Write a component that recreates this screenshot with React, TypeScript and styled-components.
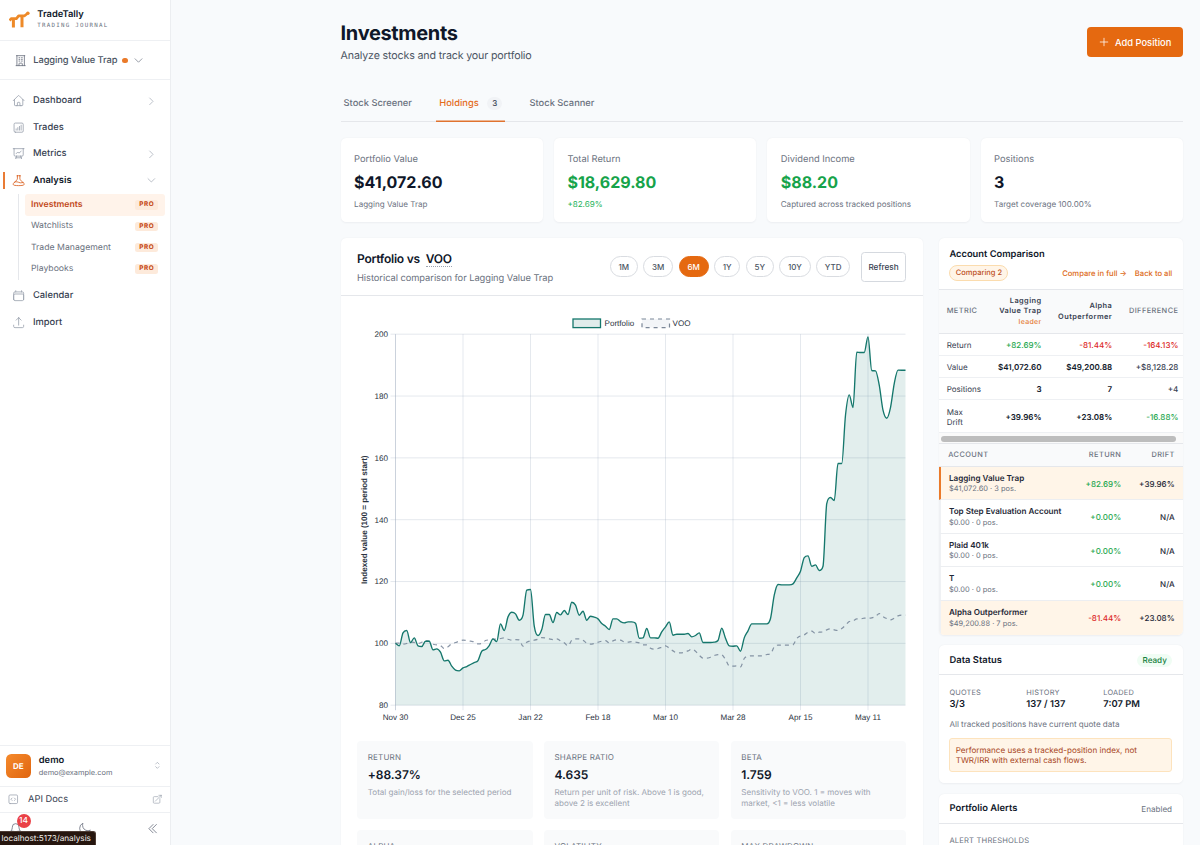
import React from 'react';
import styled, { createGlobalStyle, css } from 'styled-components';
import {
  HiOutlineHome,
  HiOutlineBuildingOffice,
  HiOutlineChevronRight,
  HiOutlineChevronDown,
  HiOutlineChartBarSquare,
  HiOutlinePresentationChartLine,
  HiOutlineBeaker,
  HiOutlineCalendar,
  HiOutlineArrowUpTray,
  HiOutlineBell,
  HiOutlineMoon,
  HiOutlineChevronDoubleLeft,
  HiOutlineChevronUpDown,
  HiOutlineCodeBracketSquare,
  HiOutlineArrowTopRightOnSquare,
  HiOutlinePlus,
} from 'react-icons/hi2';

const c = {
  ink: '#0f1729',
  body: '#374151',
  mid: '#4b5563',
  muted: '#6b7280',
  faint: '#9ca3af',
  line: '#e5e7eb',
  soft: '#f9fafb',
  page: '#f8fafc',
  orange: '#e56910',
  rust: '#c2410c',
  green: '#16a34a',
  red: '#dc2626',
};

const Global = createGlobalStyle`
  *, *::before, *::after { box-sizing: border-box; }
  body {
    margin: 0;
    background: ${c.page};
    color: ${c.ink};
    font-family: Inter, "Liberation Sans", sans-serif;
    text-rendering: geometricPrecision;
    -webkit-font-smoothing: antialiased;
    overflow: hidden;
  }
  button { font: inherit; cursor: pointer; }
  h1, h2, p { margin: 0; }
`;

const Shell = styled.div`
  display: flex;
  height: 845px;
  overflow: hidden;
  position: relative;
`;

/* Sidebar */

const Sidebar = styled.aside`
  width: 171px;
  flex: none;
  display: flex;
  flex-direction: column;
  background: #fff;
  border-right: 1px solid #eceef1;
`;

const Brand = styled.div`
  height: 41px;
  display: flex;
  align-items: center;
  gap: 7.1px;
  padding: 0 0 0 9.2px;
  border-bottom: 1px solid #eef0f3;
`;

const BrandName = styled.div`
  font-size: 9.33px;
  line-height: 12px;
  font-weight: 600;
`;

const BrandTag = styled.div`
  font-family: "DejaVu Sans Mono", monospace;
  font-size: 5.8px;
  line-height: 10px;
  letter-spacing: 1.25px;
  color: ${c.muted};
`;

const AccountSwitch = styled.div`
  height: 39px;
  display: flex;
  align-items: center;
  padding: 0.6px 0 0 14px;
  border-bottom: 1px solid #eef0f3;
  font-size: 9.33px;
  font-weight: 500;
  letter-spacing: -0.1px;
  color: ${c.mid};
  svg { width: 13.3px; height: 13.3px; color: ${c.muted}; }
  span { margin-left: 6px; }
  svg:last-child { width: 11px; height: 11px; margin-left: 5px; }
`;

const Dot = styled.i`
  width: 5.4px;
  height: 5.4px;
  border-radius: 50%;
  background: #ea7a2a;
  margin-left: 5px;
`;

const Nav = styled.nav`
  flex: 1;
  padding-top: 7.6px;
`;

const NavItem = styled.div<{ $active?: boolean }>`
  height: 26.5px;
  display: flex;
  align-items: center;
  padding: 0 13.5px 0 11.8px;
  font-size: 9.33px;
  font-weight: ${p => (p.$active ? 600 : 500)};
  color: ${p => (p.$active ? c.ink : c.body)};
  svg { width: 13.3px; height: 13.3px; flex: none; color: ${p => (p.$active ? '#d9601f' : c.faint)}; }
  span { flex: 1; margin-left: 7.9px; }
  svg:last-child { width: 10.7px; height: 10.7px; color: ${c.faint}; }
  ${p =>
    p.$active &&
    css`
      &::before {
        content: '';
        flex: none;
        width: 1.6px;
        height: 17px;
        background: #e97b35;
        margin: 0 7.1px 0 -8.7px;
      }
    `}
`;

const SubNav = styled.div`
  margin: 0.6px 5px 2.8px 18px;
  padding: 0 0 0 5.8px;
  border-left: 1px solid ${c.line};
`;

const SubItem = styled.div<{ $active?: boolean }>`
  height: 21.4px;
  display: flex;
  align-items: center;
  justify-content: space-between;
  padding: 0 7px 0 6.2px;
  border-radius: 3px;
  font-size: 8.7px;
  font-weight: ${p => (p.$active ? 600 : 400)};
  color: ${p => (p.$active ? '#c2491a' : c.muted)};
  background: ${p => (p.$active ? '#fff3ea' : 'transparent')};
`;

const Pro = styled.span`
  font-size: 6.4px;
  line-height: 9.4px;
  font-weight: 700;
  letter-spacing: 0.55px;
  padding: 0 3.8px 0 4.4px;
  border-radius: 2.5px;
  color: ${c.rust};
  background: #fdeadb;
`;

const UserRow = styled.div`
  height: 41.4px;
  border-top: 1px solid #eef0f3;
  display: flex;
  align-items: center;
  padding: 0 7.5px 0 6px;
  div { flex: 1; margin-left: 8.3px; padding-top: 1px; }
  b { display: block; font-size: 9.33px; line-height: 12px; font-weight: 600; }
  small { display: block; font-size: 7.4px; line-height: 11px; color: ${c.muted}; }
  svg { width: 10.7px; height: 10.7px; color: ${c.faint}; }
`;

const Avatar = styled.span`
  width: 24.5px;
  height: 24.5px;
  border-radius: 5.3px;
  background: linear-gradient(135deg, #f58a2c, #e0650f);
  color: #fff;
  font-size: 8px;
  font-weight: 700;
  display: grid;
  place-items: center;
`;

const DocsRow = styled.div`
  height: 26px;
  border-top: 1px solid #eef0f3;
  display: flex;
  align-items: center;
  padding: 0 8px 0 6.5px;
  font-size: 9.33px;
  color: ${c.body};
  svg { width: 12.5px; height: 12.5px; color: ${c.faint}; }
  span { flex: 1; margin-left: 9px; }
  svg:last-child { width: 10.5px; height: 10.5px; }
`;

const FootRow = styled.div`
  height: 33px;
  border-top: 1px solid #eef0f3;
  display: flex;
  align-items: center;
  justify-content: space-between;
  padding: 0 10.5px 0 9px;
  svg { width: 13.3px; height: 13.3px; color: ${c.muted}; }
`;

const BellWrap = styled.span`
  position: relative;
  display: flex;
`;

const Count = styled.span`
  position: absolute;
  left: 7.5px;
  top: -8.8px;
  width: 14px;
  height: 14px;
  border-radius: 50%;
  background: #ea4147;
  color: #fff;
  font-size: 8.4px;
  font-weight: 500;
  display: grid;
  place-items: center;
`;

const StatusTip = styled.div`
  position: absolute;
  left: 0;
  bottom: 0;
  height: 14px;
  width: 96px;
  padding-left: 1.5px;
  border-radius: 0 3px 0 0;
  border-top: 1px solid #4c3b33;
  border-right: 1px solid #4c3b33;
  background: #26160f;
  color: #f3efec;
  font-size: 8.2px;
  line-height: 13px;
  white-space: nowrap;
`;

/* Page head */

const Main = styled.main`
  width: 1012px;
  padding: 21px 0 0 169.6px;
`;

const PageHead = styled.header`
  width: 842.4px;
  height: 68px;
  display: flex;
  justify-content: space-between;
  align-items: flex-start;
  h1 { font-size: 20px; line-height: 24px; font-weight: 700; letter-spacing: -0.34px; }
  p { font-size: 10.67px; line-height: 16px; margin-top: 3.3px; letter-spacing: -0.15px; color: ${c.mid}; }
`;

const AddButton = styled.button`
  height: 30px;
  width: 96px;
  margin-top: 6px;
  border: 0;
  border-radius: 4px;
  background: ${c.orange};
  color: #fff;
  font-size: 9.33px;
  font-weight: 500;
  white-space: nowrap;
  display: flex;
  align-items: center;
  padding: 0 0 0 11px;
  gap: 5px;
  svg { width: 12px; height: 12px; }
`;

const Tabs = styled.div`
  width: 842.4px;
  height: 33px;
  display: flex;
  gap: 21.3px;
  border-bottom: 1px solid ${c.line};
`;

const Tab = styled.div<{ $active?: boolean }>`
  height: 33px;
  display: flex;
  align-items: center;
  padding: 0 3px 4px;
  font-size: 9.33px;
  font-weight: 500;
  color: ${p => (p.$active ? '#e46c1c' : c.muted)};
  ${p => p.$active && 'box-shadow: inset 0 -1.4px 0 #e0732f;'}
  span {
    margin-left: 8.5px;
    padding: 0 5px;
    line-height: 13px;
    border-radius: 7px;
    font-size: 8px;
    color: ${c.body};
    background: #f1f3f6;
  }
`;

/* Cards */

const Card = styled.section`
  background: #fff;
  border-radius: 5.3px;
  box-shadow: 0 0.7px 2px rgba(15, 23, 42, 0.05);
  overflow: hidden;
`;

const Stats = styled.div`
  width: 842.4px;
  margin-top: 16px;
  display: grid;
  grid-template-columns: repeat(4, 1fr);
  gap: 10.9px;
`;

const StatCard = styled(Card)`
  height: 84px;
  padding: 15px 13.5px 0;
`;

const StatLabel = styled.div`
  font-size: 9.33px;
  line-height: 14px;
  color: ${c.muted};
`;

const StatValue = styled.div<{ $good?: boolean }>`
  font-size: 16px;
  line-height: 21px;
  margin-top: 5px;
  font-weight: 700;
  color: ${p => (p.$good ? c.green : c.ink)};
`;

const StatNote = styled.div<{ $good?: boolean }>`
  font-size: 8.05px;
  line-height: 11px;
  margin-top: 5.5px;
  color: ${p => (p.$good ? '#22b358' : c.muted)};
`;

const Columns = styled.div`
  width: 842.4px;
  margin-top: 16px;
  display: grid;
  grid-template-columns: 582.1px 244.3px;
  gap: 16px;
  align-items: start;
`;

const ChartHead = styled.div`
  height: 58px;
  display: flex;
  justify-content: space-between;
  align-items: center;
  padding: 0 16.5px 0 16.4px;
  border-bottom: 1px solid ${c.line};
  h2 { font-size: 12px; line-height: 17px; margin-top: 3px; font-weight: 600; letter-spacing: -0.24px; }
  h2 span { margin-left: 3px; border-bottom: 1px dotted ${c.faint}; display: inline-block; line-height: 15px; }
  p { font-size: 9.33px; line-height: 14px; margin-top: 4.9px; letter-spacing: -0.06px; color: ${c.muted}; }
`;

const Ranges = styled.div`
  display: flex;
  align-items: center;
  gap: 5.2px;
`;

const Pill = styled.button<{ $on?: boolean }>`
  height: 20.6px;
  padding: 0 7.9px;
  border-radius: 11px;
  border: 1px solid ${p => (p.$on ? c.orange : '#d9dce1')};
  background: ${p => (p.$on ? c.orange : '#fff')};
  color: ${p => (p.$on ? '#fff' : c.mid)};
  font-size: 8px;
  font-weight: 500;
`;

const Refresh = styled.button`
  height: 30px;
  width: 45.3px;
  padding: 0;
  margin-left: 5.3px;
  border: 1px solid #d5d9df;
  border-radius: 3.5px;
  background: #fff;
  color: ${c.body};
  font-size: 8.2px;
  font-weight: 500;
`;

const ChartBody = styled.div`
  padding: 16px 16.5px;
  svg { display: block; overflow: visible; }
`;

const Metrics = styled.div`
  margin-top: 16px;
  display: grid;
  grid-template-columns: repeat(3, 1fr);
  gap: 11.2px;
`;

const Metric = styled.div`
  height: 78.3px;
  padding: 10.7px;
  background: ${c.soft};
  border-radius: 4px;
  b { display: block; margin-top: 4px; font-size: 12px; line-height: 16px; font-weight: 600; letter-spacing: -0.05px; }
  p { margin-top: 4.7px; font-size: 8.05px; line-height: 10.8px; color: ${c.faint}; white-space: pre-line; }
`;

const Caps = styled.div`
  font-size: 8px;
  line-height: 11px;
  letter-spacing: 0.18px;
  color: ${c.muted};
`;

/* Right column */

const Side = styled.div`
  display: flex;
  flex-direction: column;
  gap: 10.7px;
`;

const CompareHead = styled.div`
  height: 52px;
  padding: 9.5px 10.7px 0;
  border-bottom: 1px solid ${c.line};
  h2 { font-size: 9.33px; line-height: 14px; font-weight: 600; }
`;

const CompareLine = styled.div`
  display: flex;
  align-items: center;
  margin-top: 3.7px;
  font-size: 7.65px;
  font-weight: 500;
  color: #dd6a20;
  gap: 8px;
  white-space: nowrap;
`;

const Chip = styled.span`
  height: 16px;
  line-height: 14px;
  padding: 0 5.4px;
  border-radius: 8px;
  border: 1px solid #fbdcae;
  background: #fff5e8;
  color: #bd4f1c;
  font-size: 7.5px;
  margin-right: auto;
`;

const CompareRow = styled.div<{ $h: number; $head?: boolean }>`
  height: ${p => p.$h}px;
  display: grid;
  grid-template-columns: 48px 46.8px 70.7px 66.2px;
  align-items: center;
  padding: ${p => (p.$head ? 1 : 1.8)}px 0 0 8px;
  border-bottom: 1px solid ${p => (p.$head ? c.line : '#eef0f3')};
  background: ${p => (p.$head ? c.soft : '#fff')};
  font-size: 8px;
  line-height: 10.7px;
  color: ${c.body};
`;

const Head = styled.span<{ $strong?: boolean }>`
  text-align: right;
  font-size: 7.4px;
  line-height: 10.7px;
  letter-spacing: 0.42px;
  font-weight: ${p => (p.$strong ? 600 : 500)};
  color: ${p => (p.$strong ? c.body : c.muted)};
  &:first-child { text-align: left; }
  em { display: block; font-style: normal; font-weight: 500; font-size: 7px; letter-spacing: 0.3px; color: #e67a35; }
`;

const Num = styled.span<{ $tone?: 'good' | 'bad'; $bold?: boolean }>`
  text-align: right;
  font-weight: ${p => (p.$bold ? 600 : 500)};
  color: ${p => (p.$tone === 'good' ? '#1fa850' : p.$tone === 'bad' ? c.red : p.$bold ? c.ink : c.body)};
`;

const ScrollTrack = styled.div`
  height: 11px;
  padding: 2.8px 6.5px 0 2.5px;
  background: #fafafa;
  border-bottom: 1px solid ${c.line};
  &::before {
    content: '';
    display: block;
    height: 5.4px;
    border-radius: 3px;
    background: #bdbdbd;
  }
`;

const AccountRow = styled.div<{ $mark?: boolean; $tint?: boolean; $last?: boolean }>`
  height: ${p => (p.$last ? 33.7 : 33.5)}px;
  display: grid;
  grid-template-columns: 1fr 54px 53.5px;
  align-items: center;
  padding: 1px 8.4px 0 8.3px;
  border-left: 2.7px solid ${p => (p.$mark ? '#ea7a2a' : '#eff1f4')};
  border-bottom: ${p => (p.$last ? 0 : 1)}px solid #eceef1;
  background: ${p => (p.$tint ? '#fff5e8' : '#fff')};
  font-size: 8px;
  ${Num}:last-child { color: #1f2937; }
  b { display: block; font-weight: 600; font-size: 8.1px; line-height: 10.7px; white-space: nowrap; color: #1f2937; }
  small { display: block; font-size: 7.45px; line-height: 11.2px; color: ${c.muted}; }
`;

const AccountHead = styled.div`
  height: 22.5px;
  display: grid;
  grid-template-columns: 1fr 54px 53.5px;
  align-items: center;
  padding: 1px 8.2px 0 9.5px;
  background: ${c.soft};
  border-bottom: 1px solid ${c.line};
`;

const SideHead = styled.div`
  height: 30px;
  display: flex;
  align-items: center;
  justify-content: space-between;
  padding: 1px 10.9px 0;
  border-bottom: 1px solid ${c.line};
  h2 { font-size: 9.4px; font-weight: 600; }
  span { font-size: 8.1px; color: ${c.muted}; }
`;

const Ready = styled.em`
  font-style: normal;
  font-size: 8.1px;
  font-weight: 500;
  line-height: 13px;
  padding: 0 5.3px;
  border-radius: 7px;
  color: #15803d;
  background: #f0fdf4;
`;

const StatusBody = styled.div`
  padding: 11.4px 10.7px 11px;
  > p { font-size: 8.05px; line-height: 11px; margin-top: 8.8px; color: ${c.muted}; }
`;

const StatusGrid = styled.div`
  display: grid;
  grid-template-columns: repeat(3, 1fr);
  column-gap: 8px;
  b { display: block; font-size: 9.4px; line-height: 13px; font-weight: 600; }
  ${Caps} { font-size: 7.4px; }
`;

const Notice = styled.div`
  height: 34px;
  margin-top: 7.8px;
  padding: 5.3px 5.3px;
  border: 1px solid #fde3bd;
  border-radius: 3px;
  background: #fff5e8;
  color: #a8451c;
  font-size: 8.08px;
  line-height: 10.8px;
  white-space: nowrap;
`;

const AlertsBody = styled.div`
  padding: 10.7px 10.7px 40px;
  ${Caps} { font-size: 7.6px; }
`;

/* Chart series: one height per trading day, measured down from the top of the scale */

const portfolio = [
  969, 977, 938, 931, 967, 953, 977, 979, 963, 963, 989, 986, 996, 1022, 1020, 1038, 1050, 1052, 1043, 1039,
  1033, 1027, 1021, 993, 988, 976, 956, 964, 911, 931, 890, 876, 881, 900, 885, 810, 808, 918, 946, 928,
  883, 883, 907, 877, 884, 871, 883, 846, 855, 885, 873, 900, 888, 891, 896, 910, 918, 928, 896, 896,
  904, 908, 905, 905, 909, 954, 953, 925, 953, 953, 954, 935, 920, 905, 945, 942, 942, 942, 940, 950,
  946, 938, 967, 967, 967, 966, 961, 924, 954, 977, 978, 977, 993, 953, 932, 911, 911, 911, 911, 911,
  895, 825, 793, 794, 794, 794, 791, 773, 753, 712, 707, 738, 734, 751, 738, 550, 532, 541, 430, 430,
  285, 224, 262, 96, 97, 97, 50, 151, 152, 195, 270, 294, 262, 190, 150, 150, 150,
];

const benchmark = [
  969, 969, 972, 970, 965, 967, 970, 966, 961, 963, 972, 974, 976, 985, 980, 970, 967, 963, 960, 961,
  963, 965, 971, 970, 961, 959, 957, 957, 955, 953, 957, 960, 958, 959, 978, 966, 962, 960, 957, 952,
  953, 956, 958, 956, 962, 968, 977, 960, 956, 956, 960, 969, 972, 970, 966, 963, 961, 968, 962, 959,
  960, 965, 966, 964, 966, 968, 974, 974, 984, 987, 985, 981, 977, 984, 992, 998, 998, 996, 992, 987,
  993, 1005, 1014, 1014, 1011, 1006, 1003, 1004, 1018, 1037, 1038, 1037, 1040, 1015, 1008, 1007, 1007, 1007, 1007, 1003,
  1001, 980, 975, 975, 975, 975, 974, 955, 947, 944, 936, 933, 940, 936, 935, 929, 926, 929, 931, 925,
  915, 904, 902, 896, 896, 894, 894, 893, 889, 880, 889, 895, 899, 894, 887, 885, 885,
];

const PLOT = { left: 38.5, top: 22.2, right: 548.5, bottom: 393.2 };
const STEP = (PLOT.right - PLOT.left) / 136;

/* Monotone cubic interpolation, so flat stretches stay flat */
function curve(values: number[]) {
  const ys = values.map(v => PLOT.top + (v - 42) / 3);
  const n = ys.length;
  const d = ys.slice(1).map((y, i) => y - ys[i]);
  const m = ys.map((_, i) => {
    if (i === 0) return d[0];
    if (i === n - 1) return d[n - 2];
    return d[i - 1] * d[i] <= 0 ? 0 : (d[i - 1] + d[i]) / 2;
  });
  d.forEach((delta, i) => {
    if (delta === 0) {
      m[i] = 0;
      m[i + 1] = 0;
      return;
    }
    const a = m[i] / delta;
    const b = m[i + 1] / delta;
    const s = a * a + b * b;
    if (s > 9) {
      const t = 3 / Math.sqrt(s);
      m[i] = t * a * delta;
      m[i + 1] = t * b * delta;
    }
  });
  let path = `M${PLOT.left},${ys[0].toFixed(2)}`;
  for (let i = 0; i < n - 1; i++) {
    const x = PLOT.left + i * STEP;
    path += `C${(x + STEP / 3).toFixed(2)},${(ys[i] + m[i] / 3).toFixed(2)} ${(x + (2 * STEP) / 3).toFixed(2)},${(
      ys[i + 1] - m[i + 1] / 3
    ).toFixed(2)} ${(x + STEP).toFixed(2)},${ys[i + 1].toFixed(2)}`;
  }
  return path;
}

const dates = ['Nov 30', 'Dec 25', 'Jan 22', 'Feb 18', 'Mar 10', 'Mar 28', 'Apr 15', 'May 11'];
const levels = [200, 180, 160, 140, 120, 100, 80];

const ChartText = styled.text<{ $bold?: boolean }>`
  font-family: "Liberation Sans", Arial, sans-serif;
  font-size: 8.1px;
  font-weight: ${p => (p.$bold ? 700 : 400)};
  fill: #2b3341;
`;

function PerformanceChart() {
  const line = curve(portfolio);
  return (
    <svg width="548.5" height="413" viewBox="0 0 548.5 413">
      {levels.map((v, i) => {
        const y = PLOT.top + (i * (PLOT.bottom - PLOT.top)) / 6;
        return (
          <g key={v}>
            <line x1={PLOT.left - 5} x2={PLOT.right} y1={y} y2={y} stroke="#94a3b8" strokeOpacity="0.27" strokeWidth="0.9" />
            <ChartText x="31" y={y + 2.9} textAnchor="end">{v}</ChartText>
          </g>
        );
      })}
      {dates.map((t, i) => {
        const x = PLOT.left + i * 18 * STEP;
        return (
          <g key={t}>
            <line x1={x} x2={x} y1={PLOT.top} y2={PLOT.bottom + 5} stroke="#94a3b8" strokeOpacity={i ? 0.27 : 0.55} strokeWidth="0.9" />
            <ChartText x={x} y="408" textAnchor="middle">{t}</ChartText>
          </g>
        );
      })}
      <path d={`${line}L${PLOT.right},${PLOT.bottom}L${PLOT.left},${PLOT.bottom}Z`} fill="#0f766e" fillOpacity="0.12" />
      <path d={curve(benchmark)} fill="none" stroke="#64748b" strokeOpacity="0.75" strokeWidth="1.2" strokeDasharray="4 4" />
      <path d={line} fill="none" stroke="#15776c" strokeWidth="1.35" strokeLinejoin="round" />
      <rect x="216" y="7" width="27.5" height="8.6" fill="#e0eceb" stroke="#15776c" strokeWidth="1.3" />
      <ChartText x="247.5" y="14.2">Portfolio</ChartText>
      <rect x="285" y="7" width="27.5" height="8.6" fill="#f3f5f8" stroke="#7b8798" strokeWidth="1.2" strokeDasharray="4 4" />
      <ChartText x="315.5" y="14.2">VOO</ChartText>
      <ChartText $bold transform="translate(10 207.7) rotate(-90)" textAnchor="middle">
        Indexed value (100 = period start)
      </ChartText>
    </svg>
  );
}

function Logo() {
  return (
    <svg width="21" height="18" viewBox="0 0 21 18" fill="none" stroke="#ee8a28">
      <path d="M0.6 9.6 2.2 7.6H7.4L9.6 4.8H15.6L19.4 1.8" strokeWidth="2.7" strokeLinejoin="round" />
      <path d="M4.4 7.6V16.6M13 4.8V16.2" strokeWidth="3" />
      <circle cx="18.9" cy="2.3" r="1.7" fill="#ee8a28" stroke="none" />
    </svg>
  );
}

const subItems = ['Investments', 'Watchlists', 'Trade Management', 'Playbooks'];

const stats = [
  { label: 'Portfolio Value', value: '$41,072.60', note: 'Lagging Value Trap' },
  { label: 'Total Return', value: '$18,629.80', note: '+82.69%', good: true, noteGood: true },
  { label: 'Dividend Income', value: '$88.20', note: 'Captured across tracked positions', good: true },
  { label: 'Positions', value: '3', note: 'Target coverage 100.00%' },
];

const metrics = [
  { label: 'RETURN', value: '+88.37%', note: 'Total gain/loss for the selected period' },
  { label: 'SHARPE RATIO', value: '4.635', note: 'Return per unit of risk. Above 1 is good,\nabove 2 is excellent' },
  { label: 'BETA', value: '1.759', note: 'Sensitivity to VOO. 1 = moves with\nmarket, <1 = less volatile' },
  { label: 'ALPHA', value: '', note: '' },
  { label: 'VOLATILITY', value: '', note: '' },
  { label: 'MAX DRAWDOWN', value: '', note: '' },
];

const accounts = [
  { name: 'Lagging Value Trap', info: '$41,072.60 · 3 pos.', ret: '+82.69%', drift: '+39.96%', mark: true, tint: true },
  { name: 'Top Step Evaluation Account', info: '$0.00 · 0 pos.', ret: '+0.00%', drift: 'N/A' },
  { name: 'Plaid 401k', info: '$0.00 · 0 pos.', ret: '+0.00%', drift: 'N/A' },
  { name: 'T', info: '$0.00 · 0 pos.', ret: '+0.00%', drift: 'N/A' },
  { name: 'Alpha Outperformer', info: '$49,200.88 · 7 pos.', ret: '-81.44%', drift: '+23.08%', tint: true, last: true },
];

export default function App() {
  return (
    <>
      <Global />
      <Shell>
        <Sidebar>
          <Brand>
            <Logo />
            <div>
              <BrandName>TradeTally</BrandName>
              <BrandTag>TRADING JOURNAL</BrandTag>
            </div>
          </Brand>
          <AccountSwitch>
            <HiOutlineBuildingOffice />
            <span>Lagging Value Trap</span>
            <Dot />
            <HiOutlineChevronDown />
          </AccountSwitch>
          <Nav>
            <NavItem><HiOutlineHome /><span>Dashboard</span><HiOutlineChevronRight /></NavItem>
            <NavItem><HiOutlineChartBarSquare /><span>Trades</span></NavItem>
            <NavItem><HiOutlinePresentationChartLine /><span>Metrics</span><HiOutlineChevronRight /></NavItem>
            <NavItem $active><HiOutlineBeaker /><span>Analysis</span><HiOutlineChevronDown /></NavItem>
            <SubNav>
              {subItems.map((t, i) => (
                <SubItem key={t} $active={i === 0}>{t}<Pro>PRO</Pro></SubItem>
              ))}
            </SubNav>
            <NavItem><HiOutlineCalendar /><span>Calendar</span></NavItem>
            <NavItem><HiOutlineArrowUpTray /><span>Import</span></NavItem>
          </Nav>
          <UserRow>
            <Avatar>DE</Avatar>
            <div><b>demo</b><small>demo@example.com</small></div>
            <HiOutlineChevronUpDown />
          </UserRow>
          <DocsRow>
            <HiOutlineCodeBracketSquare />
            <span>API Docs</span>
            <HiOutlineArrowTopRightOnSquare />
          </DocsRow>
          <FootRow>
            <BellWrap><HiOutlineBell /><Count>14</Count></BellWrap>
            <HiOutlineMoon />
            <HiOutlineChevronDoubleLeft />
          </FootRow>
        </Sidebar>

        <Main>
          <PageHead>
            <div>
              <h1>Investments</h1>
              <p>Analyze stocks and track your portfolio</p>
            </div>
            <AddButton><HiOutlinePlus />Add Position</AddButton>
          </PageHead>
          <Tabs>
            <Tab>Stock Screener</Tab>
            <Tab $active>Holdings<span>3</span></Tab>
            <Tab>Stock Scanner</Tab>
          </Tabs>
          <Stats>
            {stats.map(s => (
              <StatCard key={s.label}>
                <StatLabel>{s.label}</StatLabel>
                <StatValue $good={s.good}>{s.value}</StatValue>
                <StatNote $good={s.noteGood}>{s.note}</StatNote>
              </StatCard>
            ))}
          </Stats>
          <Columns>
            <Card>
              <ChartHead>
                <div>
                  <h2>Portfolio vs <span>VOO</span></h2>
                  <p>Historical comparison for Lagging Value Trap</p>
                </div>
                <Ranges>
                  {['1M', '3M', '6M', '1Y', '5Y', '10Y', 'YTD'].map(t => (
                    <Pill key={t} $on={t === '6M'}>{t}</Pill>
                  ))}
                  <Refresh>Refresh</Refresh>
                </Ranges>
              </ChartHead>
              <ChartBody>
                <PerformanceChart />
                <Metrics>
                  {metrics.map(m => (
                    <Metric key={m.label}>
                      <Caps>{m.label}</Caps>
                      <b>{m.value}</b>
                      <p>{m.note}</p>
                    </Metric>
                  ))}
                </Metrics>
              </ChartBody>
            </Card>

            <Side>
              <Card>
                <CompareHead>
                  <h2>Account Comparison</h2>
                  <CompareLine>
                    <Chip>Comparing 2</Chip>
                    <span>Compare in full →</span>
                    <span>Back to all</span>
                  </CompareLine>
                </CompareHead>
                <CompareRow $h={43.5} $head>
                  <Head>METRIC</Head>
                  <Head $strong>Lagging Value Trap<em>leader</em></Head>
                  <Head $strong>Alpha Outperformer</Head>
                  <Head>DIFFERENCE</Head>
                </CompareRow>
                <CompareRow $h={22.3}>
                  <span>Return</span>
                  <Num $tone="good">+82.69%</Num>
                  <Num $tone="bad">-81.44%</Num>
                  <Num $tone="bad">-164.13%</Num>
                </CompareRow>
                <CompareRow $h={22.3}>
                  <span>Value</span>
                  <Num $bold>$41,072.60</Num>
                  <Num $bold>$49,200.88</Num>
                  <Num>+$8,128.28</Num>
                </CompareRow>
                <CompareRow $h={22.3}>
                  <span>Positions</span>
                  <Num $bold>3</Num>
                  <Num $bold>7</Num>
                  <Num>+4</Num>
                </CompareRow>
                <CompareRow $h={33}>
                  <span>Max<br />Drift</span>
                  <Num $bold>+39.96%</Num>
                  <Num $bold>+23.08%</Num>
                  <Num $tone="good">-16.88%</Num>
                </CompareRow>
                <ScrollTrack />
                <AccountHead>
                  <Head>ACCOUNT</Head>
                  <Head>RETURN</Head>
                  <Head>DRIFT</Head>
                </AccountHead>
                {accounts.map(a => (
                  <AccountRow key={a.name} $mark={a.mark} $tint={a.tint} $last={a.last}>
                    <div><b>{a.name}</b><small>{a.info}</small></div>
                    <Num $tone={a.ret[0] === '-' ? 'bad' : 'good'}>{a.ret}</Num>
                    <Num>{a.drift}</Num>
                  </AccountRow>
                ))}
              </Card>

              <Card>
                <SideHead><h2>Data Status</h2><Ready>Ready</Ready></SideHead>
                <StatusBody>
                  <StatusGrid>
                    <div><Caps>QUOTES</Caps><b>3/3</b></div>
                    <div><Caps>HISTORY</Caps><b>137 / 137</b></div>
                    <div><Caps>LOADED</Caps><b>7:07 PM</b></div>
                  </StatusGrid>
                  <p>All tracked positions have current quote data</p>
                  <Notice>Performance uses a tracked-position index, not<br />TWR/IRR with external cash flows.</Notice>
                </StatusBody>
              </Card>

              <Card>
                <SideHead><h2>Portfolio Alerts</h2><span>Enabled</span></SideHead>
                <AlertsBody><Caps>ALERT THRESHOLDS</Caps></AlertsBody>
              </Card>
            </Side>
          </Columns>
        </Main>
        <StatusTip>localhost:5173/analysis</StatusTip>
      </Shell>
    </>
  );
}
